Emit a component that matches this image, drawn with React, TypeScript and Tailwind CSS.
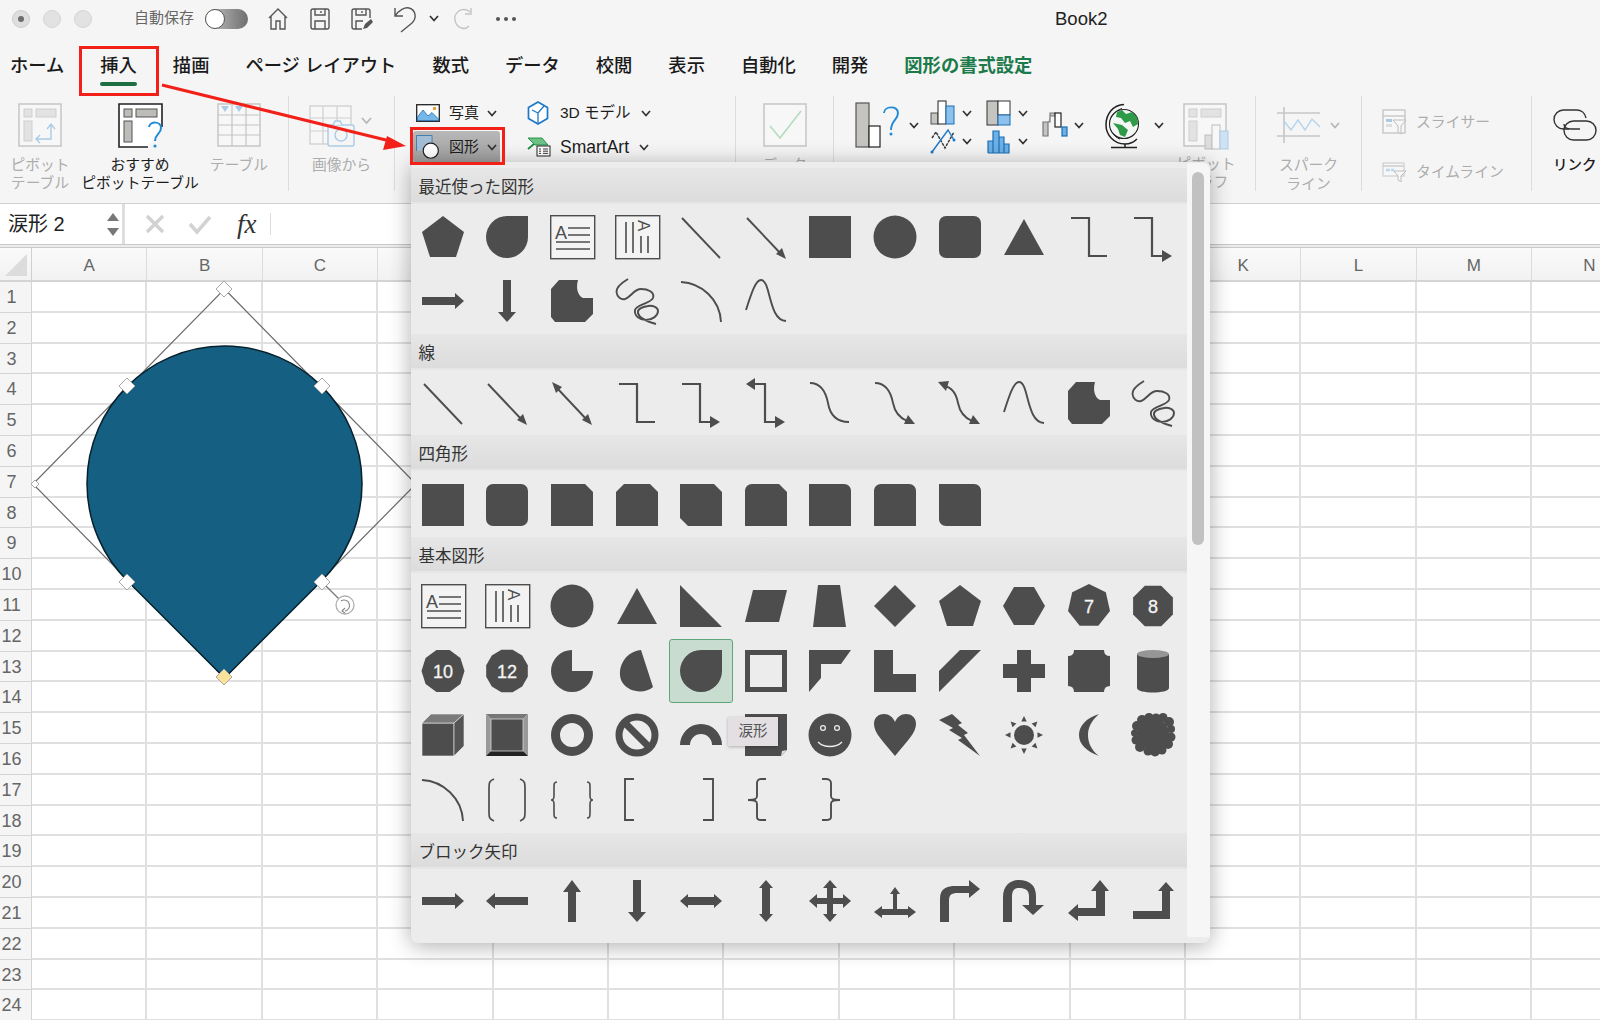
import type { ReactNode } from "react";

const FILL = "#4d4d4d";

function polygon(n: number, rot = -90) {
  const pts: string[] = [];
  for (let i = 0; i < n; i++) {
    const a = ((rot + (360 / n) * i) * Math.PI) / 180;
    pts.push(`${(22 + 21.5 * Math.cos(a)).toFixed(1)},${(22 + 22 * Math.sin(a)).toFixed(1)}`);
  }
  return pts.join(" ");
}

const F = ({ d }: { d: string }) => <path d={d} fill={FILL} fillRule="evenodd" />;
const S = ({ d, w = 1.9 }: { d: string; w?: number }) => <path d={d} fill="none" stroke={FILL} strokeWidth={w} />;
const Num = ({ n }: { n: string }) => (
  <text x="22" y="28.5" textAnchor="middle" fontSize="18" fill="#f4f4f4" stroke="#f4f4f4" strokeWidth="0.3" fontFamily="Liberation Sans, sans-serif">
    {n}
  </text>
);

const textbox = (
  <>
    <rect x="0.7" y="0.7" width="44" height="43" fill="#f3f3f3" stroke={FILL} strokeWidth="1.4" />
    <text x="5" y="24" fontSize="18" fill={FILL} fontFamily="Liberation Sans, sans-serif">A</text>
    <S d="M18 13H40M18 20H40M6 27H40M6 34H40" w={1.6} />
  </>
);
const vtext = (
  <>
    <rect x="0.7" y="0.7" width="44" height="43" fill="#f3f3f3" stroke={FILL} strokeWidth="1.4" />
    <text transform="translate(23 5) rotate(90)" fontSize="17" fill={FILL} fontFamily="Liberation Sans, sans-serif">A</text>
    <S d="M11 7V38M18 7V38M26 21V38M33 21V38" w={1.6} />
  </>
);
const line = <S d="M3 3L41 43" />;
const arrowLine = (
  <>
    <S d="M3 3L38 40" />
    <F d="M42 44L32 39L38 33Z" />
  </>
);
const dblLine = (
  <>
    <S d="M6 6L38 40" />
    <F d="M2 1L12 6L6 12Z" />
    <F d="M42 44L32 39L38 33Z" />
  </>
);
const elbow = <S d="M4 3H22V41H40" w={2.2} />;
const elbowArrow = (
  <>
    <S d="M3 3H21V41H32" w={2.2} />
    <F d="M41 41L31 35V47Z" />
  </>
);
const elbowDbl = (
  <>
    <S d="M10 3H21V41H32" w={2.2} />
    <F d="M2 3L11 -3V9Z" />
    <F d="M41 41L31 35V47Z" />
  </>
);
const curveConn = <S d="M2 2C14 2 18 12 20 22C22 34 28 41 41 41" />;
const curveArrow = (
  <>
    <S d="M2 2C14 2 18 12 20 22C22 32 27 37 34 40" />
    <F d="M42 43L31 43L35 34Z" />
  </>
);
const curveDbl = (
  <>
    <S d="M6 5C14 6 18 12 20 22C22 32 27 37 34 40" />
    <F d="M0 1L11 0L8 10Z" />
    <F d="M42 43L31 43L35 34Z" />
  </>
);
const bell = <S d="M2 31C8 12 12 1 17 1C27 1 24 41 42 42" />;
const scribble = <S d="M13 0C8 3 1 8 1.5 13C2 18 6 21 10 20C16 18 19 10 26 10C33 10 40 13 38 19C36 24 21 26 20 31C19 37 25 41 31 41C37 41 43 37 43 32C43 28 37 26 33 27C27 28 22 30 23 34C24 39 34 43 41 45" />;
const freeform = <F d="M9 1H28C26 8 27 16 33 19H43V35L35 43H5L1 38V10Z" />;
const arc = <S d="M2 3C22 4 41 20 42 43" />;
const rect = <F d="M1 1H43V43H1Z" />;
const rrect = <rect x="1" y="1" width="42" height="42" rx="7" fill={FILL} />;
const ellipse = <circle cx="22" cy="22" r="21.5" fill={FILL} />;
const triangle = <F d="M22 4L42 40H2Z" />;
const pentagon = <F d="M22 1L43 17L35 42H9L1 17Z" />;
const teardrop = <F d="M43 1V22A21 21 0 1 1 22 1Z" />;

const rayAngles = [0, 45, 90, 135, 180, 225, 270, 315];
const cloudBumps: [number, number, number][] = [
  [11, 7, 5], [18, 5, 5], [25, 5, 4.5], [32, 4.5, 4.5], [38, 9, 5], [40, 16, 4], [40, 24, 4.5], [37, 31, 5], [31, 37, 4.5], [24, 38.5, 5],
  [17, 38, 4.5], [9, 34, 5], [5, 27, 4.5], [3.5, 20, 3.5], [6, 13, 5], [22, 21, 16],
];

const shapes: Record<string, ReactNode> = {
  textbox, vtext, line, arrowLine, dblLine, elbow, elbowArrow, elbowDbl, curveConn, curveArrow, curveDbl, bell, scribble, freeform, arc,
  rect, rrect, ellipse, triangle, pentagon, teardrop,
  snip1: <F d="M1 1H35L43 9V43H1Z" />,
  snip2: <F d="M9 1H35L43 9V43H1V9Z" />,
  snipDiag: <F d="M1 1H35L43 9V43H9L1 35Z" />,
  snipRound: <F d="M8 1H35L43 9V43H1V8C1 4 4 1 8 1Z" />,
  round1: <F d="M1 1H36C40 1 43 4 43 8V43H1Z" />,
  round2: <F d="M8 1H36C40 1 43 4 43 8V43H1V8C1 4 4 1 8 1Z" />,
  roundDiag: <F d="M1 1H36C40 1 43 4 43 8V43H8C4 43 1 40 1 36Z" />,
  rightTri: <F d="M1 1L43 43H1Z" />,
  para: <F d="M9 6H43L35 38H1Z" />,
  trap: <F d="M10 1H32L38 43H5Z" />,
  diamond: <F d="M22 1L43 22L22 43L1 22Z" />,
  hexagon: <F d="M12 3H32L43 22L32 41H12L1 22Z" />,
  hepta: <><polygon points={polygon(7)} fill={FILL} /><Num n="7" /></>,
  octa: <><polygon points={polygon(8, -67.5)} fill={FILL} /><Num n="8" /></>,
  deca: <><polygon points={polygon(10, -72)} fill={FILL} /><Num n="10" /></>,
  dodeca: <><polygon points={polygon(12, -75)} fill={FILL} /><Num n="12" /></>,
  pie: <F d="M22 1A21 21 0 1 0 43 22H22Z" />,
  chord: <F d="M26 1L38 38C30 45 14 44 7 33C1 22 8 3 26 1Z" />,
  frame: <F d="M1 1H43V43H1ZM6 6V38H38V6Z" />,
  halfFrame: <F d="M1 1H43L33 15H13V29L1 43Z" />,
  lshape: <F d="M1 1H20V25H43V43H1Z" />,
  stripe: <F d="M22 1H43L1 43V22Z" />,
  cross: <F d="M15 1H29V15H43V29H29V43H15V29H1V15H15Z" />,
  plaque: <F d="M7 1H37Q37 7 43 7V37Q37 37 37 43H7Q7 37 1 37V7Q7 7 7 1Z" />,
  can: (
    <>
      <path d="M6 5V39C6 45 38 45 38 39V5Z" fill={FILL} />
      <ellipse cx="22" cy="5" rx="16" ry="4" fill="#969696" />
    </>
  ),
  cube: (
    <>
      <path d="M1 10H33V43H1Z" fill={FILL} stroke="#f0f0f0" strokeWidth="0.6" />
      <path d="M1 10L10 1H43L33 10Z" fill="#7a7a7a" stroke="#f0f0f0" strokeWidth="0.6" />
      <path d="M33 10L43 1V33L33 43Z" fill="#555" stroke="#f0f0f0" strokeWidth="0.6" />
    </>
  ),
  bevel: (
    <>
      <path d="M1 1H43L38 6H6Z" fill="#777" />
      <path d="M1 1L6 6V38L1 43Z" fill="#999" />
      <path d="M43 1L38 6V38L43 43Z" fill="#999" />
      <path d="M1 43L6 38H38L43 43Z" fill="#222" />
      <rect x="6" y="6" width="32" height="32" fill={FILL} stroke="#d8d8d8" strokeWidth="0.8" />
    </>
  ),
  donut: <circle cx="22" cy="22" r="16.5" fill="none" stroke={FILL} strokeWidth="9" />,
  noSymbol: (
    <>
      <circle cx="22" cy="22" r="18" fill="none" stroke={FILL} strokeWidth="7" />
      <path d="M9 9L35 35" stroke={FILL} strokeWidth="7" />
    </>
  ),
  blockArc: <F d="M1 32A21 21 0 0 1 43 32H33A11 11 0 0 0 11 32Z" />,
  folded: (
    <>
      <F d="M1 1H43V37L37 43H1Z" />
      <path d="M37 43L38 38L43 37Z" fill="#dcdcdc" />
    </>
  ),
  smiley: (
    <>
      <circle cx="22" cy="22" r="21.5" fill={FILL} />
      <circle cx="15" cy="15" r="2.4" fill="none" stroke="#eee" strokeWidth="1.2" />
      <circle cx="29" cy="15" r="2.4" fill="none" stroke="#eee" strokeWidth="1.2" />
      <path d="M10 29C16 35 28 35 34 29" fill="none" stroke="#eee" strokeWidth="1.4" />
    </>
  ),
  heart: <F d="M22 43C10 28 1 20 1 11C1 4 6 1 11 1C16 1 20 4 22 9C24 4 28 1 33 1C38 1 43 4 43 11C43 20 34 28 22 43Z" />,
  lightning: <F d="M1 7L14 1L24 10L20 12L30 20L26 22L42 43L20 27L24 25L11 17L15 15Z" />,
  sun: (
    <>
      <circle cx="22" cy="22" r="10" fill={FILL} />
      {rayAngles.map((a) => (
        <path key={a} d="M22 3L24.7 8.5H19.3Z" fill={FILL} transform={`rotate(${a} 22 22)`} />
      ))}
    </>
  ),
  moon: <F d="M32 1C24 8 21 15 21 22C21 29 24 37 32 43C19 38 12 31 12 22C12 13 19 5 32 1Z" />,
  cloud: (
    <>
      {cloudBumps.map(([x, y, r]) => (
        <circle key={`${x}-${y}`} cx={x} cy={y} r={r} fill={FILL} />
      ))}
    </>
  ),
  bigArc: <S d="M1 2C22 3 41 20 42 43" />,
  dblBracket: <S d="M9 1C4 3 4 5 4 10V34C4 39 4 41 9 43M35 1C40 3 40 5 40 10V34C40 39 40 41 35 43" w={1.7} />,
  dblBrace: <S d="M7 4C4 4 4 6 4 9V18C4 21 3 22 1 22C3 22 4 23 4 26V35C4 38 4 40 7 40M37 4C40 4 40 6 40 9V18C40 21 41 22 43 22C41 22 40 23 40 26V35C40 38 40 40 37 40" w={1.6} />,
  lBracket: <S d="M19 1H10V42H19" />,
  rBracket: <S d="M24 1H34V42H24" />,
  lBrace: <S d="M22 1H17C14 1 13 3 13 5V18C13 21 11 22 4 22C11 22 13 23 13 26V39C13 41 14 42 17 42H22" />,
  rBrace: <S d="M14 1H18C21 1 23 3 23 5V18C23 21 25 22 32 22C25 22 23 23 23 26V39C23 41 21 42 18 42H14" />,
  aRight: <F d="M1 18H34V14L43 22L34 30V26H1Z" />,
  aLeft: <F d="M43 18H10V14L1 22L10 30V26H43Z" />,
  aUp: <F d="M22 1L31 13H26V43H18V13H13Z" />,
  aDown: <F d="M18 1H26V33H31L22 43L13 33H18Z" />,
  aLR: <F d="M1 22L9 15V18H35V15L43 22L35 29V26H9V29Z" />,
  aUD: <F d="M22 1L29 9H26V35H29L22 43L15 35H18V9H15Z" />,
  aQuad: <F d="M22 1L29 9H25V19H35V15L43 22L35 29V25H25V35H29L22 43L15 35H19V25H9V29L1 22L9 15V19H19V9H15Z" />,
  aLRU: <F d="M22 8L27 15H24V30H35V27L43 33L35 39V36H9V39L1 33L9 27V30H20V15H17Z" />,
  aBent: <F d="M2 43V20C2 9 9 7 18 7H31V1L42 10L31 19V14H20C13 14 11 16 11 22V43Z" />,
  aUturn: <F d="M1 43V18C1 6 9 1 17 1C27 1 34 6 34 17V26H42L31 36L20 26H27V17C27 11 23 9 17 9C12 9 10 12 10 18V43Z" />,
  aLeftUp: <F d="M1 34L11 25V29H29V12H24L33 1L42 12H38V37H11V42Z" />,
  aBentUp: <F d="M2 32H31V12H27L35 3L43 12H39V40H2Z" />,
};

const sections: { title: string; rows: string[]; body: string }[] = [
  {
    title: "最近使った図形",
    body: "pt-px pb-px",
    rows: ["pentagon", "teardrop", "textbox", "vtext", "line", "arrowLine", "rect", "ellipse", "rrect", "triangle", "elbow", "elbowArrow", "aRight", "aDown", "freeform", "scribble", "arc", "bell"],
  },
  {
    title: "線",
    body: "pt-px",
    rows: ["line", "arrowLine", "dblLine", "elbow", "elbowArrow", "elbowDbl", "curveConn", "curveArrow", "curveDbl", "bell", "freeform", "scribble"],
  },
  {
    title: "四角形",
    body: "pt-[2px]",
    rows: ["rect", "rrect", "snip1", "snip2", "snipDiag", "snipRound", "round1", "round2", "roundDiag"],
  },
  {
    title: "基本図形",
    body: "gap-y-[0.7px] pb-px pt-px",
    rows: [
      "textbox", "vtext", "ellipse", "triangle", "rightTri", "para", "trap", "diamond", "pentagon", "hexagon", "hepta", "octa",
      "deca", "dodeca", "pie", "chord", "teardrop", "frame", "halfFrame", "lshape", "stripe", "cross", "plaque", "can",
      "cube", "bevel", "donut", "noSymbol", "blockArc", "folded", "smiley", "heart", "lightning", "sun", "moon", "cloud",
      "bigArc", "dblBracket", "dblBrace", "lBracket", "rBracket", "lBrace", "rBrace",
    ],
  },
  {
    title: "ブロック矢印",
    body: "pt-0",
    rows: ["aRight", "aLeft", "aUp", "aDown", "aLR", "aUD", "aQuad", "aLRU", "aBent", "aUturn", "aLeftUp", "aBentUp"],
  },
];

function Chevron({ dim }: { dim?: boolean }) {
  return (
    <svg width="10" height="7" viewBox="0 0 10 7" className="shrink-0">
      <path d="M1 1L5 5.5L9 1" fill="none" stroke={dim ? "#b5b5b5" : "#333"} strokeWidth="1.7" />
    </svg>
  );
}

function PivotIcon() {
  return (
    <svg width="44" height="44" viewBox="0 0 44 44">
      <rect x="1" y="1" width="42" height="42" fill="#f7f7f7" stroke="#c9c9c9" strokeWidth="1.6" />
      <rect x="6" y="6" width="8" height="8" fill="#e2e2e2" stroke="#cfcfcf" />
      <rect x="18" y="6" width="20" height="8" fill="#e2e2e2" stroke="#cfcfcf" />
      <rect x="6" y="18" width="8" height="20" fill="#e2e2e2" stroke="#cfcfcf" />
      <path d="M18 36H33V22M29 26L33 21L37 26M22 32L18 36L22 40" fill="none" stroke="#a9cbe6" strokeWidth="1.4" />
    </svg>
  );
}

function RecPivotIcon() {
  return (
    <svg width="48" height="46" viewBox="0 0 48 46" className="ml-[4px]">
      <path d="M30 44H1V1H44V24" fill="#fff" stroke="#222" strokeWidth="1.6" />
      <rect x="6" y="6" width="8" height="8" fill="#bdbcb8" stroke="#555" />
      <rect x="18" y="6" width="21" height="8" fill="#bdbcb8" stroke="#555" />
      <rect x="6" y="18" width="8" height="21" fill="#bdbcb8" stroke="#555" />
      <path d="M31 24C32 18 43 18 43 25C43 31 37 31 37 38" fill="none" stroke="#1f8ad6" strokeWidth="2" />
      <circle cx="37" cy="43" r="1.6" fill="#1f8ad6" />
    </svg>
  );
}

function TableIcon() {
  return (
    <svg width="44" height="44" viewBox="0 0 44 44">
      <rect x="1" y="1" width="42" height="42" fill="#f7f7f7" stroke="#c4c4c4" strokeWidth="1.4" />
      <path d="M1 12H43M1 22H43M1 32H43M15 1V43M29 1V43" stroke="#c4c4c4" strokeWidth="1.2" />
      <path d="M4 3H12L8 9ZM18 3H26L22 9Z" fill="#a9cbe6" />
    </svg>
  );
}

function PictureFromIcon() {
  return (
    <svg width="70" height="44" viewBox="0 0 70 44" className="ml-[4px]">
      <rect x="1" y="3" width="41" height="38" fill="#f7f7f7" stroke="#cfcfcf" strokeWidth="1.3" />
      <path d="M1 15H42M1 28H42M14 3V41M28 3V41" stroke="#cfcfcf" strokeWidth="1.2" />
      <rect x="19" y="22" width="26" height="21" rx="2" fill="#f5f5f5" stroke="#a9cbe6" strokeWidth="1.4" />
      <path d="M24 22L26 18H31L33 22" fill="#f5f5f5" stroke="#a9cbe6" strokeWidth="1.4" />
      <circle cx="32" cy="32" r="6" fill="none" stroke="#a9cbe6" strokeWidth="1.4" />
      <path d="M53 15L57.5 20L62 15" fill="none" stroke="#b5b5b5" strokeWidth="1.7" />
    </svg>
  );
}

function PhotoIcon() {
  return (
    <svg width="24" height="18" viewBox="0 0 24 18">
      <rect x="0.7" y="0.7" width="22.6" height="16.6" fill="#fff" stroke="#222" strokeWidth="1.3" />
      <path d="M1.5 16.5V13L7 6L12 12L16 8.5L22.5 15V16.5Z" fill="#76b7ea" stroke="#1c6fb4" strokeWidth="0.8" />
      <rect x="17" y="3" width="3" height="3" fill="#ee9a35" />
    </svg>
  );
}

function CubeIcon() {
  return (
    <svg width="22" height="24" viewBox="0 0 22 24">
      <path d="M11 1L20.5 6.5V17.5L11 23L1.5 17.5V6.5Z" fill="#fff" stroke="#1c78c8" strokeWidth="1.7" />
      <path d="M5 9L11 12L17 5M11 12V22" fill="none" stroke="#1c78c8" strokeWidth="1.3" />
    </svg>
  );
}

function ShapesIcon() {
  return (
    <svg width="26" height="26" viewBox="0 0 26 26">
      <path d="M1 17V1H17V9" fill="#a3bdd4" stroke="#1c6fb4" strokeWidth="1.5" />
      <path d="M1 17H7L17 9V1H1Z" fill="#a3bdd4" />
      <circle cx="16" cy="17" r="8.2" fill="#fff" stroke="#222" strokeWidth="1.3" />
    </svg>
  );
}

function SmartArtIcon() {
  return (
    <svg width="24" height="20" viewBox="0 0 24 20">
      <path d="M1 1H15L21 8H8Z" fill="#6cc184" stroke="#1d8a44" strokeWidth="0.9" />
      <path d="M1 12L7 7" stroke="#1d8a44" strokeWidth="1.8" />
      <rect x="10" y="9" width="13" height="10" fill="#fff" stroke="#222" />
      <path d="M12 12H14M16 12H21M12 14.2H14M16 14.2H21M12 16.4H14M16 16.4H21" stroke="#222" strokeWidth="0.9" />
    </svg>
  );
}

function CheckIcon() {
  return (
    <svg width="44" height="44" viewBox="0 0 44 44">
      <rect x="1" y="1" width="42" height="42" fill="#f7f7f7" stroke="#c9c9c9" strokeWidth="1.6" />
      <path d="M7 23L17 35L38 8" fill="none" stroke="#b4dcbe" strokeWidth="1.6" />
    </svg>
  );
}

function RecChartIcon() {
  return (
    <svg width="46" height="47" viewBox="0 0 46 47">
      <rect x="1" y="1" width="13" height="44" fill="#c5c4c0" stroke="#555" strokeWidth="1.2" />
      <rect x="14" y="24" width="11" height="21" fill="#fff" stroke="#222" strokeWidth="1.2" />
      <path d="M29 11C29 4 43 3 43 11C43 18 36 18 36 28" fill="none" stroke="#1f8ad6" strokeWidth="1.9" />
      <circle cx="36" cy="32" r="1.5" fill="#1f8ad6" />
    </svg>
  );
}

function ColChartIcon() {
  return (
    <svg width="26" height="26" viewBox="0 0 26 26">
      <rect x="1" y="13" width="7" height="11" fill="#c5c4c0" stroke="#555" />
      <rect x="8" y="1" width="8" height="23" fill="#fff" stroke="#222" />
      <rect x="16" y="6" width="8" height="18" fill="#8cc1ee" stroke="#1c6fb4" />
    </svg>
  );
}

function LineChartIcon() {
  return (
    <svg width="26" height="26" viewBox="0 0 26 26">
      <path d="M2 10L6 4L15 20L24 4" fill="none" stroke="#333" strokeWidth="1.4" strokeDasharray="3 1" />
      <path d="M2 24L18 2L24 12" fill="none" stroke="#1c78c8" strokeWidth="1.4" />
      <circle cx="2" cy="24" r="1.5" fill="#1c78c8" />
      <circle cx="24" cy="12" r="1.5" fill="#1c78c8" />
    </svg>
  );
}

function TreemapIcon() {
  return (
    <svg width="26" height="26" viewBox="0 0 26 26">
      <rect x="1" y="1" width="11" height="24" fill="#c5c4c0" stroke="#333" />
      <rect x="12" y="1" width="12" height="14" fill="#fff" stroke="#333" />
      <rect x="12" y="15" width="12" height="10" fill="#8cc1ee" stroke="#1c6fb4" />
    </svg>
  );
}

function HistIcon() {
  return (
    <svg width="26" height="26" viewBox="0 0 26 26">
      <path d="M2 25V13H7V25M7 25V3H13V25M13 25V9H18V25M18 25V16H23V25H2" fill="#6cb0e6" stroke="#1c6fb4" strokeWidth="1.2" />
    </svg>
  );
}

function WaterfallIcon() {
  return (
    <svg width="26" height="26" viewBox="0 0 26 26">
      <path d="M1 24V10H6V24ZM6 10H8V1H13V4H8" fill="#c5c4c0" stroke="#777" strokeWidth="1.2" />
      <rect x="13" y="1" width="6" height="14" fill="#fff" stroke="#222" strokeWidth="1.2" />
      <rect x="20" y="15" width="5" height="9" fill="#6cb0e6" stroke="#1c6fb4" strokeWidth="1.2" />
    </svg>
  );
}

function GlobeIcon() {
  return (
    <svg width="36" height="47" viewBox="0 0 36 47">
      <path d="M20 2.5C9 3 2 12 2 23C2 33 10 42 21 42C26 42 30 40 33 37" fill="none" stroke="#222" strokeWidth="1.5" />
      <path d="M18 6.5C10 9 6 15 6 22C6 29 10 35 16 37" fill="none" stroke="#222" strokeWidth="1" />
      <circle cx="20" cy="22" r="14.5" fill="#f4f8f4" stroke="#222" strokeWidth="1.1" />
      <path d="M13 10L18 8L22 12L28 10L33 15L34 22L29 25L26 19L21 21L17 16L12 15ZM9 21L18 23L24 28L21 35L16 33L14 27Z" fill="#2f9a48" />
      <path d="M21 42V45M7 45.5H33" stroke="#222" strokeWidth="1.5" />
    </svg>
  );
}

function PivotChartIcon() {
  return (
    <svg width="46" height="47" viewBox="0 0 46 47">
      <rect x="1" y="1" width="42" height="42" fill="#f7f7f7" stroke="#c9c9c9" strokeWidth="1.6" />
      <rect x="6" y="6" width="8" height="8" fill="#e2e2e2" stroke="#cfcfcf" />
      <rect x="18" y="6" width="20" height="8" fill="#e2e2e2" stroke="#cfcfcf" />
      <rect x="6" y="18" width="8" height="20" fill="#e2e2e2" stroke="#cfcfcf" />
      <rect x="22" y="32" width="7" height="14" fill="#ddd" stroke="#bdbdbd" />
      <rect x="29" y="22" width="8" height="24" fill="#f7f7f7" stroke="#bdbdbd" />
      <rect x="37" y="28" width="8" height="18" fill="#cfe2f3" stroke="#a9cbe6" />
    </svg>
  );
}

function SparkIcon() {
  return (
    <svg width="43" height="36" viewBox="0 0 43 36">
      <path d="M0 6H43M0 29H43M7 0V36" stroke="#c6c6c6" strokeWidth="1.6" />
      <path d="M7 14L14 23L21 13L28 23L35 12L43 20" fill="none" stroke="#b5d5ee" strokeWidth="1.4" />
    </svg>
  );
}

function SlicerIcon() {
  return (
    <svg width="25" height="26" viewBox="0 0 25 26">
      <rect x="1" y="1" width="22" height="23" fill="#f7f7f7" stroke="#c6c6c6" strokeWidth="1.4" />
      <path d="M1 7H23" stroke="#c6c6c6" strokeWidth="1.4" />
      <rect x="4" y="10" width="6" height="3" fill="#a9cbe6" />
      <rect x="4" y="15" width="6" height="3" fill="#ddd" />
      <path d="M11 11H24L19 17V25L16 23V17Z" fill="#f7f7f7" stroke="#bdbdbd" />
    </svg>
  );
}

function TimelineIcon() {
  return (
    <svg width="25" height="20" viewBox="0 0 25 20">
      <rect x="1" y="1" width="21" height="13" fill="#f7f7f7" stroke="#cfcfcf" strokeWidth="1.2" />
      <path d="M1 4H22" stroke="#cfcfcf" strokeWidth="1.6" />
      <path d="M4 8H8M9 8H12" stroke="#bcd6ec" strokeWidth="2.5" />
      <path d="M12 9H24L19 14V20L16 18V14Z" fill="#f7f7f7" stroke="#bdbdbd" />
    </svg>
  );
}

function LinkIcon() {
  return (
    <svg width="44" height="32" viewBox="0 0 44 32">
      <path d="M16 20H10.5A9.5 9.5 0 0 1 10.5 1H23.5C28 1 32 4 33 9" fill="none" stroke="#333" strokeWidth="1.4" />
      <path d="M11 15C11 19 15 20 18 20H27" fill="none" stroke="#333" strokeWidth="1.4" />
      <rect x="11" y="12" width="32" height="19" rx="9.5" fill="none" stroke="#333" strokeWidth="1.4" />
    </svg>
  );
}

function Sep() {
  return <div className="h-[95px] w-px shrink-0 bg-[#dcdcdc]" />;
}

function BigButton({ width, icon, label, dim }: { width: string; icon: ReactNode; label: string[]; dim?: boolean }) {
  return (
    <div className={`flex shrink-0 flex-col items-center pt-[7px] ${width}`}>
      <div className="flex h-[43px] items-start justify-center">{icon}</div>
      <div className={`mt-[10px] whitespace-nowrap text-center text-[14.8px] leading-[18px] ${dim ? "text-[#adadad]" : "text-[#1c1c1c]"}`}>
        {label.map((l) => (
          <div key={l}>{l}</div>
        ))}
      </div>
    </div>
  );
}

function SmallButton({ icon, label, active }: { icon: ReactNode; label: string; active?: boolean }) {
  return (
    <div className={`flex h-[32px] w-fit items-center rounded-[3px] px-[3px] ${active ? "bg-gradient-to-b from-[#b8b8b8] to-[#9e9e9e]" : ""}`}>
      <div className="flex w-[24px] justify-start">{icon}</div>
      <span className="ml-[9px] text-[15px] text-[#1c1c1c]">{label}</span>
      <span className="ml-[8px]">
        <Chevron />
      </span>
    </div>
  );
}

function ChartCell({ icon }: { icon: ReactNode }) {
  return (
    <div className="flex h-[28px] items-center gap-[6px]">
      {icon}
      <Chevron />
    </div>
  );
}

function Ribbon() {
  return (
    <div className="flex h-[108px] overflow-hidden border-b border-[#cfcfcf] bg-[#f5f5f5]">
      <BigButton width="w-[80px]" icon={<PivotIcon />} label={["ピボット", "テーブル"]} dim />
      <BigButton width="w-[120px]" icon={<RecPivotIcon />} label={["おすすめ", "ピボットテーブル"]} />
      <BigButton width="w-[78px]" icon={<TableIcon />} label={["テーブル"]} dim />
      <div className="w-[10px] shrink-0" />
      <Sep />
      <BigButton width="w-[105px]" icon={<PictureFromIcon />} label={["画像から"]} dim />
      <Sep />
      <div className="grid w-[340px] shrink-0 grid-cols-[111px_1fr] content-start pl-[18px] pt-px">
        <SmallButton icon={<PhotoIcon />} label="写真" />
        <div className="flex h-[32px] items-center pl-[3px]">
          <CubeIcon />
          <span className="ml-[11px] text-[15.5px] text-[#1c1c1c]">3D モデル</span>
          <span className="ml-[10px]">
            <Chevron />
          </span>
        </div>
        <div className="mt-[2px]">
          <SmallButton icon={<ShapesIcon />} label="図形" active />
        </div>
        <div className="mt-[2px] flex h-[32px] items-center pl-[3px]">
          <SmartArtIcon />
          <span className="ml-[9px] text-[17.5px] text-[#1c1c1c]">SmartArt</span>
          <span className="ml-[10px]">
            <Chevron />
          </span>
        </div>
      </div>
      <Sep />
      <BigButton width="w-[97px]" icon={<CheckIcon />} label={["データ"]} dim />
      <Sep />
      <div className="flex w-[421px] shrink-0 items-start pl-[21px] pt-[3px]">
        <div className="flex flex-col items-center">
          <div className="flex h-[52px] items-center gap-[8px]">
            <RecChartIcon />
            <Chevron />
          </div>
          <div className="mt-[10px] text-[14.8px] leading-[18px] text-[#1c1c1c]">おすすめ</div>
        </div>
        <div className="ml-[11px] grid grid-cols-[56px_56px]">
          <ChartCell icon={<ColChartIcon />} />
          <ChartCell icon={<TreemapIcon />} />
          <ChartCell icon={<LineChartIcon />} />
          <ChartCell icon={<HistIcon />} />
        </div>
        <div className="flex h-[52px] items-center gap-[6px]">
          <WaterfallIcon />
          <Chevron />
        </div>
        <div className="ml-[16px] flex flex-col items-center">
          <div className="flex h-[52px] items-center gap-[14px]">
            <GlobeIcon />
            <Chevron />
          </div>
          <div className="mt-[10px] pr-[24px] text-[14.8px] leading-[18px] text-[#1c1c1c]">マップ</div>
        </div>
        <div className="ml-[8px] flex flex-col items-center pt-[4px] text-center">
          <PivotChartIcon />
          <div className="mt-[5px] whitespace-nowrap text-[14.8px] leading-[18px] text-[#adadad]">
            <div>ピボット</div>
            <div>グラフ</div>
          </div>
        </div>
      </div>
      <Sep />
      <div className="flex w-[105px] shrink-0 flex-col items-center pt-[11px]">
        <div className="flex h-[36px] items-center gap-[10px]">
          <SparkIcon />
          <Chevron dim />
        </div>
        <div className="mt-[13px] text-center text-[14.8px] leading-[19px] text-[#adadad]">
          <div>スパーク</div>
          <div>ライン</div>
        </div>
      </div>
      <Sep />
      <div className="flex w-[169px] shrink-0 flex-col gap-[27px] pl-[20px] pt-[13px] text-[14.8px] leading-[18px] text-[#adadad]">
        <div className="flex h-[26px] items-center gap-[9px]">
          <SlicerIcon />
          <span>スライサー</span>
        </div>
        <div className="flex h-[20px] items-center gap-[9px]">
          <TimelineIcon />
          <span>タイムライン</span>
        </div>
      </div>
      <Sep />
      <div className="flex shrink-0 flex-col items-start pl-[21px] pt-[13px]">
        <LinkIcon />
        <div className="mt-[15px] text-[14.5px] font-medium leading-[18px] text-[#1c1c1c]">リンク</div>
      </div>
    </div>
  );
}

function TitleBar() {
  return (
    <div className="flex h-[37px] items-center bg-[#f5f5f5] pl-[12px]">
      <div className="flex gap-[13px]">
        <div className="flex h-[18px] w-[18px] items-center justify-center rounded-full border border-[#cdcdcd] bg-[#dedede]">
          <div className="h-[6px] w-[6px] rounded-full bg-[#6d6d6d]" />
        </div>
        <div className="h-[18px] w-[18px] rounded-full border border-[#d5d5d5] bg-[#e2e2e2]" />
        <div className="h-[18px] w-[18px] rounded-full border border-[#d5d5d5] bg-[#e2e2e2]" />
      </div>
      <span className="ml-[42px] whitespace-nowrap text-[15px] text-[#666]">自動保存</span>
      <div className="ml-[11px] h-[20px] w-[43px] rounded-full bg-gradient-to-r from-[#c8c8c8] to-[#6f6f6f]">
        <div className="h-[20px] w-[20px] rounded-full border border-[#555] bg-white" />
      </div>
      <svg width="24" height="24" viewBox="0 0 24 24" className="ml-[18px]">
        <path d="M3 11L12 2L21 11M5 9V22H10V14H14V22H19V9" fill="none" stroke="#555" strokeWidth="1.4" />
      </svg>
      <svg width="24" height="24" viewBox="0 0 24 24" className="ml-[18px]">
        <path d="M3 4C3 3 4 2 5 2H19C20 2 21 3 21 4V20C21 21 20 22 19 22H5C4 22 3 21 3 20ZM7 2V8H17V2M7 22V14H17V22M13 4V6" fill="none" stroke="#555" strokeWidth="1.4" />
      </svg>
      <svg width="24" height="24" viewBox="0 0 24 24" className="ml-[17px]">
        <path d="M13 22H5C4 22 3 21 3 20V4C3 3 4 2 5 2H19C20 2 21 3 21 4V11M7 2V8H17V2M7 22V14H14M13 4V6" fill="none" stroke="#555" strokeWidth="1.4" />
        <path d="M14 22L16 17L22 12L24 15L18 21Z" fill="#555" />
      </svg>
      <svg width="26" height="28" viewBox="0 0 26 28" className="ml-[20px]">
        <path d="M2 11C6 5 12 2 16 3C23 5 24 13 19 18L8 27M2 3V11H10" fill="none" stroke="#555" strokeWidth="1.4" />
      </svg>
      <span className="ml-[10px]">
        <Chevron />
      </span>
      <svg width="24" height="24" viewBox="0 0 24 24" className="ml-[13px]">
        <path d="M18 5C14 1 7 2 4 7C1 12 4 20 10 21C12 22 15 21 17 19M19 1V7H13" fill="none" stroke="#c4c4c4" strokeWidth="1.4" />
      </svg>
      <span className="ml-[20px] flex gap-[4px]">
        <span className="h-[4px] w-[4px] rounded-full bg-[#555]" />
        <span className="h-[4px] w-[4px] rounded-full bg-[#555]" />
        <span className="h-[4px] w-[4px] rounded-full bg-[#555]" />
      </span>
      <span className="ml-[539px] text-[18.5px] text-[#222]">Book2</span>
    </div>
  );
}

function Tabs() {
  const tabs = ["ホーム", "挿入", "描画", "ページ レイアウト", "数式", "データ", "校閲", "表示", "自動化", "開発"];
  return (
    <div className="flex h-[59px] gap-[36px] bg-[#f5f5f5] pl-[10px] pt-[18px] text-[18.3px] font-medium leading-[22px] text-[#1a1a1a]">
      {tabs.map((t) => (
        <div key={t} className="relative whitespace-nowrap">
          {t}
          {t === "挿入" && <div className="absolute left-0 top-[27px] h-[4px] w-full rounded-full bg-[#1d6f42]" />}
        </div>
      ))}
      <div className="whitespace-nowrap font-bold text-[#1d7a4b]">図形の書式設定</div>
    </div>
  );
}

function FormulaBar() {
  return (
    <div className="flex h-[40px] bg-white">
      <div className="flex w-[122px] items-center justify-between pl-[8px] pr-[2px]">
        <span className="text-[20px] text-[#222]">涙形 2</span>
        <svg width="14" height="30" viewBox="0 0 14 30">
          <path d="M7 4L13 12H1ZM7 27L1 19H13Z" fill="#777" />
        </svg>
      </div>
      <div className="h-full w-[3px] bg-[#dedede]" />
      <div className="flex items-center">
        <svg width="22" height="22" viewBox="0 0 22 22" className="ml-[19px]">
          <path d="M3 3L19 19M19 3L3 19" stroke="#d2d2d2" strokeWidth="3.5" />
        </svg>
        <svg width="24" height="22" viewBox="0 0 24 22" className="ml-[22px]">
          <path d="M2 11L9 19L22 4" fill="none" stroke="#d2d2d2" strokeWidth="3.5" />
        </svg>
        <span className="ml-[25px] font-['Liberation_Serif',serif] text-[27px] italic text-[#333]">fx</span>
        <div className="ml-[13px] h-[22px] w-px bg-[#dcdcdc]" />
      </div>
    </div>
  );
}

const COLS = ["A", "B", "C", "D", "E", "F", "G", "H", "I", "J", "K", "L", "M", "N"];
const ROWS = Array.from({ length: 24 }, (_, i) => i + 1);

function Sheet() {
  return (
    <div>
      <div className="flex h-[4px] flex-col justify-between border-y border-[#c9c9c9] bg-[#ececec]" />
      <div className="flex h-[34px] border-b-2 border-[#d4d4d4] bg-gradient-to-b from-[#fafafa] to-[#f2f2f2]">
        <div className="flex w-[32px] shrink-0 items-end justify-center border-r border-[#cfcfcf] pb-[3px]">
          <svg width="24" height="24" viewBox="0 0 24 24">
            <path d="M23 1V23H1Z" fill="#dcdcdc" />
          </svg>
        </div>
        {COLS.map((c) => (
          <div key={c} className="flex w-[115.4px] shrink-0 items-center justify-center border-r border-[#dcdcdc] pt-[3px] text-[17px] text-[#666]">
            {c}
          </div>
        ))}
      </div>
      {ROWS.map((r) => (
        <div key={r} className="flex h-[30.8px]">
          <div className="w-[32px] shrink-0 border-b border-r border-[#d4d4d4] bg-[#f5f5f5] pr-[8px] text-center text-[18px] leading-[31px] text-[#666]">
            {r}
          </div>
          {COLS.map((c) => (
            <div key={c} className="w-[115.4px] shrink-0 border-b-2 border-r-2 border-[#e0e0e0]" />
          ))}
        </div>
      ))}
    </div>
  );
}

function Diamond({ x, y, size = 8, fill = "#fff" }: { x: number; y: number; size?: number; fill?: string }) {
  return <path d={`M${x} ${y - size}L${x + size} ${y}L${x} ${y + size}L${x - size} ${y}Z`} fill={fill} stroke="#a8a8a8" strokeWidth="1" />;
}

function CanvasShape() {
  return (
    <svg width="1600" height="1020" viewBox="0 0 1600 1020" className="pointer-events-none absolute left-0 top-0">
      <path d="M224.5 289L416 484L224.5 678L33 484Z" fill="none" stroke="#6b6b6b" strokeWidth="1.2" />
      <path d="M127.5 581A137.5 137.5 0 1 1 321.5 581L224.5 678Z" fill="#156082" stroke="#06202c" strokeWidth="1.5" />
      <path d="M322 582L345 605" stroke="#777" strokeWidth="1.2" />
      <circle cx="345" cy="605" r="9" fill="#fff" stroke="#b0b0b0" strokeWidth="1.3" />
      <path d="M341 601A5.5 5.5 0 1 1 345 611M345 608L342 611L345 613" fill="none" stroke="#888" strokeWidth="1.1" />
      <Diamond x={224} y={289} />
      <Diamond x={127} y={386} />
      <Diamond x={322} y={386} />
      <Diamond x={127} y={582} />
      <Diamond x={322} y={582} />
      <Diamond x={35} y={484} size={4} />
      <Diamond x={224} y={677} fill="#fbe29a" />
    </svg>
  );
}

function ShapeCell({ name, selected }: { name: string; selected?: boolean }) {
  return (
    <div className="flex h-[64px] w-[64.6px] items-center justify-center">
      <div className={`flex h-[64px] w-[64px] items-center justify-center rounded-[3px] border ${selected ? "border-[#5fa77a] bg-[#c9dcd0]" : "border-transparent"}`}>
        <svg width="44" height="44" viewBox="0 0 44 44" className="overflow-visible">
          {shapes[name]}
        </svg>
      </div>
    </div>
  );
}

function ShapePopup() {
  return (
    <div className="absolute left-[410.5px] top-[162px] flex h-[781px] w-[799px] rounded-[7px] bg-[#ececec] shadow-[0_3px_22px_rgba(0,0,0,0.32)]">
      <div className="w-[776.5px] pt-[6px]">
        {sections.map((s, si) => (
          <div key={s.title}>
            <div className="flex h-[36px] items-center border-y-2 border-[#e6e6e6] bg-gradient-to-b from-[#e6e6e6] to-[#dcdcdc] pl-[8px] pt-[2px] text-[16.5px] text-[#333]">
              {s.title}
            </div>
            <div className={`flex flex-wrap ${s.body}`}>
              {s.rows.map((name, i) => (
                <ShapeCell key={`${name}-${i}`} name={name} selected={si === 3 && i === 16} />
              ))}
            </div>
          </div>
        ))}
      </div>
      <div className="mb-[6px] mt-px flex-1 rounded-tr-[7px] bg-[#f6f6f6] pl-[5px] pt-[9px]">
        <div className="h-[373px] w-[12px] rounded-full bg-[#c1c1c1]" />
      </div>
      <div className="absolute left-[317.5px] top-[555px] flex h-[29px] w-[50px] items-center justify-center bg-[#e3dfe3] text-[14.5px] text-[#555] shadow-[0_1px_3px_rgba(0,0,0,0.25)]">
        涙形
      </div>
    </div>
  );
}

function Annotations() {
  return (
    <>
      <div className="absolute left-[79px] top-[46px] h-[50px] w-[80px] border-[3px] border-[#f3201a]" />
      <div className="absolute left-[410px] top-[127px] h-[38px] w-[95px] border-[3px] border-[#f3201a]" />
      <svg width="1600" height="200" viewBox="0 0 1600 200" className="pointer-events-none absolute left-0 top-0">
        <path d="M162 85L390 141" stroke="#f3201a" strokeWidth="3" />
        <path d="M406 146L383 150L387 136Z" fill="#f3201a" />
      </svg>
    </>
  );
}

export default function App() {
  return (
    <div className="relative h-[1020px] w-[1600px] overflow-hidden bg-white font-['Liberation_Sans','Noto_Sans_CJK_JP',sans-serif]">
      <TitleBar />
      <Tabs />
      <Ribbon />
      <FormulaBar />
      <Sheet />
      <CanvasShape />
      <ShapePopup />
      <Annotations />
    </div>
  );
}
